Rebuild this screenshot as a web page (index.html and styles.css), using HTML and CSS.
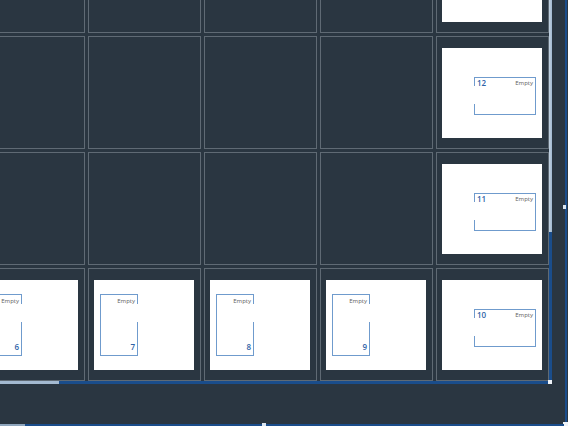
FILE: index.html
```html
<!DOCTYPE html>
<html lang="en">
<head>
    <meta charset="UTF-8">
    <meta name="viewport" content="width=device-width, initial-scale=1.0">
    <title>Rooms</title>
    <link rel="stylesheet" href="styles.css">
</head>
<body>
    <div class="stage">
        <div class="area">
            <div class="frame">
                <div class="board">
                    <div class="grid">
                        <div class="cell"></div>
                        <div class="cell"></div>
                        <div class="cell"></div>
                        <div class="cell"></div>
                        <div class="cell">
                            <div class="card east"></div>
                        </div>

                        <div class="cell"></div>
                        <div class="cell"></div>
                        <div class="cell"></div>
                        <div class="cell"></div>
                        <div class="cell">
                            <div class="card east">
                                <div class="room wide"><span class="num">12</span><span class="status">Empty</span></div>
                            </div>
                        </div>

                        <div class="cell"></div>
                        <div class="cell"></div>
                        <div class="cell"></div>
                        <div class="cell"></div>
                        <div class="cell">
                            <div class="card east">
                                <div class="room wide"><span class="num">11</span><span class="status">Empty</span></div>
                            </div>
                        </div>

                        <div class="cell">
                            <div class="card south">
                                <div class="room tall"><span class="status">Empty</span><span class="num">6</span></div>
                            </div>
                        </div>
                        <div class="cell">
                            <div class="card south">
                                <div class="room tall"><span class="status">Empty</span><span class="num">7</span></div>
                            </div>
                        </div>
                        <div class="cell">
                            <div class="card south">
                                <div class="room tall"><span class="status">Empty</span><span class="num">8</span></div>
                            </div>
                        </div>
                        <div class="cell">
                            <div class="card south">
                                <div class="room tall"><span class="status">Empty</span><span class="num">9</span></div>
                            </div>
                        </div>
                        <div class="cell">
                            <div class="card east">
                                <div class="room wide"><span class="num">10</span><span class="status">Empty</span></div>
                            </div>
                        </div>
                    </div>
                </div>
                <div class="vbar"><div class="thumb"></div><div class="track"></div></div>
                <div class="hbar"><div class="thumb"></div><div class="track"></div></div>
                <div class="knob"></div>
            </div>
        </div>
        <div class="rail-y"><div class="line"></div><span class="handle"></span></div>
        <div class="rail-x"><div class="lite"></div><div class="line"></div><span class="handle"></span></div>
        <div class="rail-corner"></div>
    </div>
</body>
</html>
```

FILE: styles.css
```css
html, body {
    height: 100%;
    margin: 0;
}

body {
    background-color: #2a3641;
    font-family: "Open Sans", "Liberation Sans", sans-serif;
    overflow: hidden;
    user-select: none;
}

.stage {
    display: grid;
    grid-template-columns: 564px 4px;
    grid-template-rows: 422px 4px;
}

.frame {
    display: grid;
    grid-template-columns: 549px 3px;
    grid-template-rows: 381px 3px;
    width: 552px;
}

.board {
    overflow: hidden;
}

.grid {
    display: grid;
    grid-template-columns: repeat(5, 113px);
    grid-auto-rows: 113px;
    gap: 3px;
    width: max-content;
    margin: -80px 0 0 -28px;
}

.cell {
    box-sizing: border-box;
    border: 1px solid #5f6a74;
    display: flex;
    align-items: center;
    justify-content: center;
}

.card {
    box-sizing: border-box;
    width: 100px;
    height: 90px;
    margin-right: 1px;
    background: #ffffff;
    display: flex;
}

.card.east {
    justify-content: flex-end;
    align-items: flex-start;
    padding: 29px 6px 0 0;
}

.card.south {
    justify-content: flex-start;
    align-items: center;
    padding-left: 6px;
}

.room {
    position: relative;
    box-sizing: border-box;
    border: 1px solid #6f9bcd;
    display: flex;
}

/* opening in the wall */
.room::after {
    content: "";
    position: absolute;
    width: 1px;
    height: 18px;
    background: #ffffff;
}

.room.wide {
    width: 62px;
    height: 38px;
    justify-content: space-between;
    align-items: flex-start;
    padding: 0 2px;
}

.room.wide::after {
    left: -1px;
    top: 8px;
}

.room.tall {
    width: 38px;
    height: 62px;
    flex-direction: column;
    justify-content: space-between;
    align-items: flex-end;
    padding: 2px 2px 3px;
}

.room.tall::after {
    right: -1px;
    top: 9px;
}

.num {
    font-size: 8px;
    line-height: 10px;
    font-weight: 600;
    color: #2e63a7;
}

.status {
    font-size: 6px;
    line-height: 8px;
    color: #5c5c5c;
}

.room.wide .status {
    margin-top: 1px;
}

.vbar, .hbar {
    display: flex;
}

.vbar {
    flex-direction: column;
}

.vbar .thumb {
    height: 232px;
    background: linear-gradient(to right, #c3d3e3, #9fb7cf);
}

.hbar .thumb {
    width: 59px;
    background: #a3b9d0;
}

.vbar .track, .hbar .track {
    flex: 1;
    background: #1a4d8b;
}

.knob {
    width: 4px;
    height: 4px;
    margin: -1px 0 0 -1px;
    background: #eef3f8;
}

.rail-y {
    position: relative;
}

.rail-y .line {
    width: 2px;
    height: 100%;
    margin-left: 1px;
    background: #1a4d8b;
}

.rail-x {
    position: relative;
    display: flex;
    align-items: flex-end;
}

.rail-x .lite {
    width: 25px;
    height: 2px;
    background: #8fa6bd;
}

.rail-x .line {
    flex: 1;
    height: 2px;
    background: #1a4d8b;
}

.handle {
    position: absolute;
    background: #dbe6f1;
}

.rail-y .handle {
    top: 205px;
    left: -1px;
    width: 3px;
    height: 4px;
}

.rail-x .handle {
    left: 262px;
    top: 1px;
    width: 4px;
    height: 3px;
}

.rail-corner {
    margin-left: -1px;
    width: 5px;
    background: #eef3f8;
}
```
